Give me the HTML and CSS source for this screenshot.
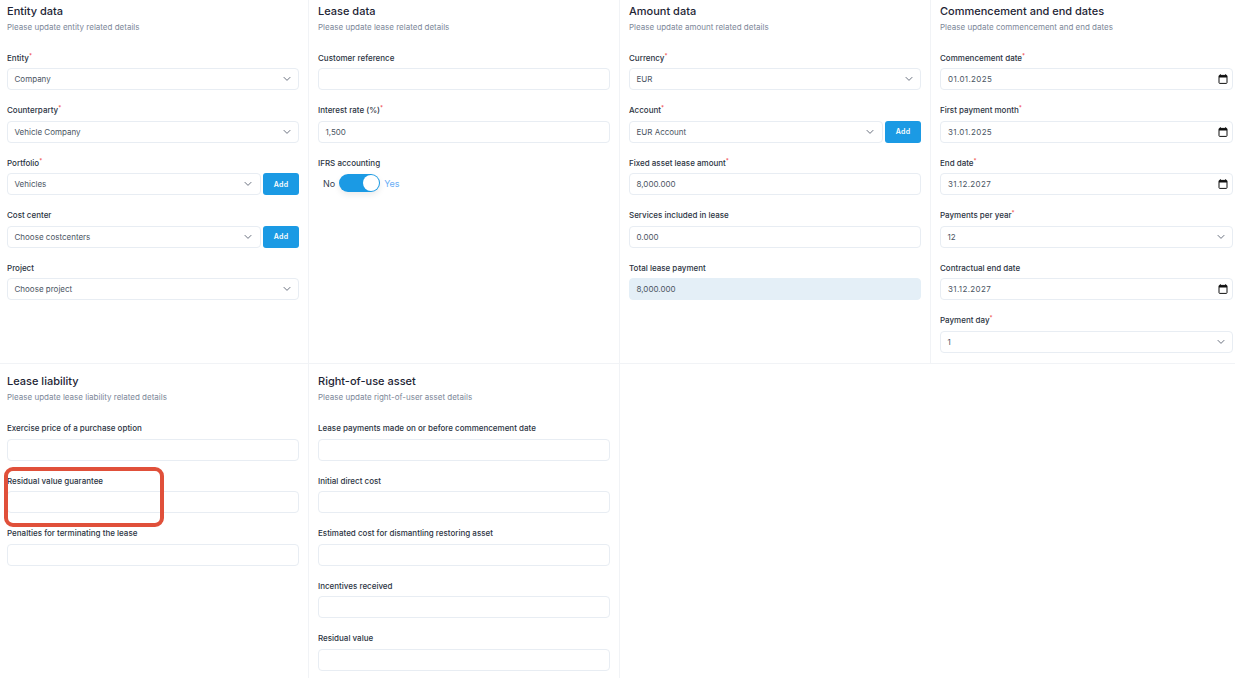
FILE: index.html
```html
<!DOCTYPE html>
<html lang="en">
<head>
<meta charset="utf-8">
<title>Lease details</title>
<link rel="stylesheet" href="styles.css">
</head>
<body>
<svg class="defs" width="0" height="0" aria-hidden="true">
  <symbol id="chev" viewBox="0 0 10 10"><path d="M2 3.4 5 6.4l3-3" fill="none" stroke="#6b7280" stroke-width="1" stroke-linecap="round" stroke-linejoin="round"/></symbol>
  <symbol id="cal" viewBox="0 0 10 10"><path d="M2.4.3v1.2M7.6.3v1.2" stroke="#111" stroke-width="1"/><rect x="1" y="1.4" width="8" height="8" rx=".7" fill="none" stroke="#111" stroke-width="1"/><rect x="1" y="1.4" width="8" height="2.1" fill="#111"/></symbol>
</svg>
<main class="page">
  <section class="panel">
    <h2>Entity data</h2>
    <p class="sub">Please update entity related details</p>
    <div class="field"><label>Entity<sup>*</sup></label><div class="control select"><span>Company</span><svg class="chev"><use href="#chev"/></svg></div></div>
    <div class="field"><label>Counterparty<sup>*</sup></label><div class="control select"><span>Vehicle Company</span><svg class="chev"><use href="#chev"/></svg></div></div>
    <div class="field"><label>Portfolio<sup>*</sup></label><div class="with-add"><div class="control select"><span>Vehicles</span><svg class="chev"><use href="#chev"/></svg></div><button class="add">Add</button></div></div>
    <div class="field"><label>Cost center</label><div class="with-add"><div class="control select"><span>Choose costcenters</span><svg class="chev"><use href="#chev"/></svg></div><button class="add">Add</button></div></div>
    <div class="field"><label>Project</label><div class="control select"><span>Choose project</span><svg class="chev"><use href="#chev"/></svg></div></div>
  </section>
  <section class="panel">
    <h2>Lease data</h2>
    <p class="sub">Please update lease related details</p>
    <div class="field"><label>Customer reference</label><div class="control"></div></div>
    <div class="field"><label>Interest rate (%)<sup>*</sup></label><div class="control"><span>1,500</span></div></div>
    <div class="field"><label>IFRS accounting</label>
      <div class="toggle-row"><span class="no">No</span><span class="track"><span class="knob"></span></span><span class="yes">Yes</span></div>
    </div>
  </section>
  <section class="panel">
    <h2>Amount data</h2>
    <p class="sub">Please update amount related details</p>
    <div class="field"><label>Currency<sup>*</sup></label><div class="control select"><span>EUR</span><svg class="chev"><use href="#chev"/></svg></div></div>
    <div class="field"><label>Account<sup>*</sup></label><div class="with-add"><div class="control select"><span>EUR Account</span><svg class="chev"><use href="#chev"/></svg></div><button class="add">Add</button></div></div>
    <div class="field"><label>Fixed asset lease amount<sup>*</sup></label><div class="control"><span>8,000.000</span></div></div>
    <div class="field"><label>Services included in lease</label><div class="control"><span>0.000</span></div></div>
    <div class="field"><label>Total lease payment</label><div class="control readonly"><span>8,000.000</span></div></div>
  </section>
  <section class="panel last">
    <h2>Commencement and end dates</h2>
    <p class="sub">Please update commencement and end dates</p>
    <div class="field"><label>Commencement date<sup>*</sup></label><div class="control date"><span>01.01.2025</span><svg class="cal"><use href="#cal"/></svg></div></div>
    <div class="field"><label>First payment month<sup>*</sup></label><div class="control date"><span>31.01.2025</span><svg class="cal"><use href="#cal"/></svg></div></div>
    <div class="field"><label>End date<sup>*</sup></label><div class="control date"><span>31.12.2027</span><svg class="cal"><use href="#cal"/></svg></div></div>
    <div class="field"><label>Payments per year<sup>*</sup></label><div class="control select"><span>12</span><svg class="chev"><use href="#chev"/></svg></div></div>
    <div class="field"><label>Contractual end date</label><div class="control date"><span>31.12.2027</span><svg class="cal"><use href="#cal"/></svg></div></div>
    <div class="field"><label>Payment day<sup>*</sup></label><div class="control select"><span>1</span><svg class="chev"><use href="#chev"/></svg></div></div>
  </section>
  <section class="panel lower">
    <h2>Lease liability</h2>
    <p class="sub">Please update lease liability related details</p>
    <div class="field"><label>Exercise price of a purchase option</label><div class="control"></div></div>
    <div class="field"><label>Residual value guarantee</label><div class="control"></div></div>
    <div class="field"><label>Penalties for terminating the lease</label><div class="control"></div></div>
  </section>
  <section class="panel lower">
    <h2>Right-of-use asset</h2>
    <p class="sub">Please update right-of-user asset details</p>
    <div class="field"><label>Lease payments made on or before commencement date</label><div class="control"></div></div>
    <div class="field"><label>Initial direct cost</label><div class="control"></div></div>
    <div class="field"><label>Estimated cost for dismantling restoring asset</label><div class="control"></div></div>
    <div class="field"><label>Incentives received</label><div class="control"></div></div>
    <div class="field"><label>Residual value</label><div class="control"></div></div>
  </section>
</main>
<div class="callout"></div>
</body>
</html>
```
FILE: styles.css
```css
* { box-sizing: border-box; }
html, body { margin: 0; height: 678px; overflow: hidden; background: #fff; }
body { font-family: Inter, "Liberation Sans", sans-serif; color: #1f2937; position: relative; }
.defs { position: absolute; }
.page {
  display: grid;
  grid-template-columns: repeat(4, 311px);
  grid-template-rows: 364px 1fr;
  margin-left: -2px;
  height: 678px;
  width: 1260px;
}
.panel {
  padding: 3px 9px 0;
  border-right: 1px solid #f1f3f6;
  border-bottom: 1px solid #f1f3f6;
}
.panel.last { border-right: 0; }
.panel.lower { padding-top: 9.4px; border-bottom: 0; }
h2 {
  margin: 0;
  font-size: 11px;
  line-height: 16px;
  font-weight: 500;
  color: #1e2535;
}
.sub {
  margin: 2px 0 18.7px;
  font-size: 8px;
  line-height: 12px;
  color: #7d8899;
}
.field { margin-bottom: 14px; }
label {
  display: block;
  height: 12px;
  margin-bottom: 4.5px;
  font-size: 8px;
  line-height: 12px;
  font-weight: 500;
  color: #2b3342;
}
sup {
  color: #ef4444;
  font-size: 6px;
  line-height: 0;
  vertical-align: 3px;
}
.control {
  display: flex;
  align-items: center;
  justify-content: space-between;
  flex: 1;
  height: 22px;
  padding: 0 6.5px;
  border: 1px solid #e8edf3;
  border-radius: 4px;
  background: #fff;
  font-size: 8px;
  color: #4b5563;
}
.readonly { background: #e4eff7; border-color: #e4eff7; }
.date span { letter-spacing: .35px; padding-left: .5px; }
.chev { width: 10px; height: 10px; flex: none; }
.cal { width: 10px; height: 10px; flex: none; margin-right: -2px; }
.with-add { display: flex; gap: 2.5px; }
.add {
  width: 36px;
  height: 22px;
  padding: 0;
  border: 0;
  border-radius: 3px;
  background: #1b9ae4;
  color: #fff;
  font: 600 7px Inter, "Liberation Sans", sans-serif;
  letter-spacing: .3px;
}
.toggle-row { display: flex; align-items: center; gap: 4px; padding-left: 5px; height: 20px; font-size: 9px; }
.no { color: #374151; }
.yes { color: #6aaef5; }
.track {
  display: flex;
  align-items: center;
  justify-content: flex-end;
  width: 41px;
  height: 18px;
  padding-right: 1px;
  border-radius: 9px;
  background: #1b9ae4;
  box-shadow: 0 3px 6px rgba(0, 0, 0, .08);
}
.knob { width: 16px; height: 16px; border-radius: 50%; background: #fff; }
.callout {
  position: absolute;
  left: 4px;
  top: 467px;
  width: 160px;
  height: 60px;
  border: 4px solid #e0503a;
  border-radius: 9px;
}
```
